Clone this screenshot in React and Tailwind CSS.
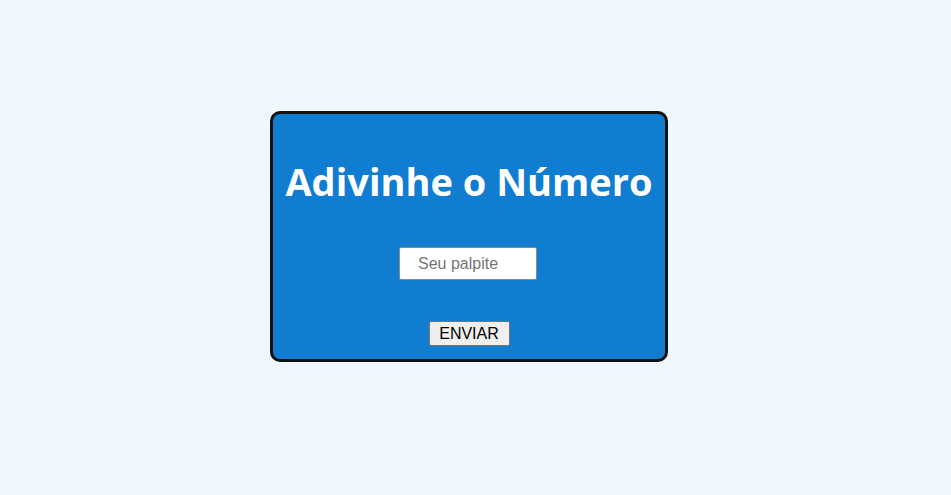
export default function App() {
  return (
    <div className="min-h-screen bg-[#f0f7ff] pt-[111px] pl-[270px]">
      <div className="box-border flex w-[398px] h-[251px] flex-col items-center rounded-[10px] border-[3px] border-[#111] bg-[#107dd0] pt-[47px]">
        <h1 className="font-['Open_Sans','Noto_Sans',sans-serif] text-[38px] font-bold leading-[40px] text-white whitespace-nowrap">
          Adivinhe o Número
        </h1>
        <input
          type="text"
          placeholder="Seu palpite"
          className="mt-[46px] mr-[2px] box-border h-[33px] w-[138px] rounded-[2px] border border-[#8a8a8a] bg-white pl-[18px] font-['Liberation_Sans',Arial,sans-serif] text-[16px] text-black placeholder:text-[#757575] outline-none"
        />
        <button
          type="button"
          className="mt-[41px] box-border h-[25px] w-[81px] rounded-[2px] border border-[#767676] bg-[#efefef] font-['Liberation_Sans',Arial,sans-serif] text-[16px] leading-none text-black"
        >
          ENVIAR
        </button>
      </div>
    </div>
  );
}
